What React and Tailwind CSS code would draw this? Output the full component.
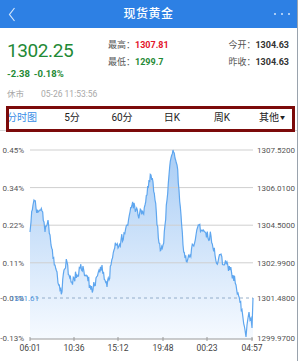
import React from 'react';

const keyPoints = [
  [30, 232], [31, 222], [33, 205], [34, 200], [36, 208], [38, 212], [40, 210], [42, 211],
  [44, 222], [45, 232], [47, 225], [48, 220], [50, 235], [51, 245], [53, 258], [55, 265],
  [57, 272], [58, 283], [60, 290], [62, 292], [64, 270], [67, 262], [69, 275], [71, 282],
  [74, 278], [77, 275], [80, 268], [83, 266], [86, 275], [90, 285], [93, 290], [96, 278],
  [99, 270], [102, 265], [105, 280], [107, 287], [109, 280], [111, 265], [114, 250], [116, 245],
  [118, 248], [121, 240], [124, 233], [127, 225], [130, 212], [132, 205], [134, 203], [136, 210],
  [138, 215], [141, 210], [143, 213], [145, 205], [147, 195], [149, 180], [151, 175], [153, 182],
  [155, 200], [157, 225], [159, 243], [161, 250], [163, 245], [165, 225], [167, 200], [169, 175],
  [171, 158], [173, 150], [175, 158], [177, 165], [179, 190], [181, 215], [183, 245], [185, 258],
  [187, 262], [190, 255], [193, 245], [196, 235], [199, 225], [202, 230], [205, 232], [208, 238],
  [211, 236], [213, 248], [215, 255], [218, 262], [221, 254], [224, 265], [227, 262], [230, 270],
  [233, 275], [236, 285], [238, 293], [240, 302], [242, 310], [243, 318], [245, 330], [246, 337],
  [247, 325], [248, 318], [249, 312], [250, 320], [251, 318], [252, 328], [253, 298],
];

// seeded jitter so the tick line looks noisy but stays the same every render
function buildLine() {
  let seed = 11;
  const rand = () => {
    seed = (seed * 16807) % 2147483647;
    return seed / 2147483647;
  };
  const pts = [];
  for (let i = 0; i < keyPoints.length - 1; i++) {
    const [x0, y0] = keyPoints[i];
    const [x1, y1] = keyPoints[i + 1];
    const steps = Math.max(1, Math.round((x1 - x0) / 0.7));
    for (let s = 0; s < steps; s++) {
      const t = s / steps;
      const x = x0 + (x1 - x0) * t;
      let y = y0 + (y1 - y0) * t;
      if (s > 0 && x < 244) y += (rand() - 0.5) * 10;
      pts.push([x, Math.min(338, y)]);
    }
  }
  pts.push(keyPoints[keyPoints.length - 1]);
  return pts;
}

const line = buildLine();
const linePath = line.map(([x, y], i) => `${i ? 'L' : 'M'}${x.toFixed(1)},${y.toFixed(1)}`).join(' ');
const areaPath = `M30,339 ${line.map(([x, y]) => `L${x.toFixed(1)},${y.toFixed(1)}`).join(' ')} L253,339 Z`;

const grid = [
  { y: 150, left: '0.45%', right: '1307.5200' },
  { y: 187.6, left: '0.34%', right: '1306.0100' },
  { y: 225.2, left: '0.22%', right: '1304.5000' },
  { y: 262.8, left: '0.11%', right: '1302.9900' },
  { y: 298, left: '-0.01%', right: '1301.4800', dashed: true },
  { y: 338, left: '-0.13%', right: '1299.9700', axis: true },
];

const times = [
  { x: 30, t: '06:01' },
  { x: 74, t: '10:36' },
  { x: 118, t: '15:12' },
  { x: 163, t: '19:48' },
  { x: 207, t: '00:23' },
  { x: 252, t: '04:57' },
];

const tabs = ['分时图', '5分', '60分', '日K', '周K', '其他'];

export default function App() {
  return (
    <div className="flex w-[300px] h-[361px] overflow-hidden bg-white font-['Roboto','Noto_Sans_CJK_SC',sans-serif]">
      <div className="w-[297px] flex flex-col">
        {/* Header */}
        <div className="h-[28px] bg-[#2d80e4] flex items-center text-white">
          <div className="w-[40px] pl-[8px] flex items-center">
            <svg width="8" height="15" viewBox="0 0 8 15">
              <polyline points="6.5,1 1.5,7.5 6.5,14" fill="none" stroke="#d2e5fb" strokeWidth="1.2" />
            </svg>
          </div>
          <div className="flex-1 text-center text-[12px] font-medium tracking-[0.5px]">现货黄金</div>
          <div className="w-[40px] flex justify-end pr-[7px] gap-[5px]">
            <span className="w-[2px] h-[2px] rounded-full bg-[#d2e5fb]" />
            <span className="w-[2px] h-[2px] rounded-full bg-[#d2e5fb]" />
            <span className="w-[2px] h-[2px] rounded-full bg-[#d2e5fb]" />
          </div>
        </div>

        {/* Quote info */}
        <div className="h-[76px] flex">
          <div className="w-[100px] pl-[7px] pt-[12px] flex flex-col">
            <div className="text-[19px] leading-[22px] text-[#1f8a36] tracking-[-0.4px]">1302.25</div>
            <div className="mt-[6px] text-[9.5px] leading-[12px] font-bold text-[#1f8a36] flex gap-[4px]">
              <span>-2.38</span>
              <span>-0.18%</span>
            </div>
            <div className="mt-[8px] text-[8.5px] leading-[12px] text-[#a8a8a8] flex gap-[17px] whitespace-nowrap">
              <span>休市</span>
              <span>05-26 11:53:56</span>
            </div>
          </div>
          <div className="flex-1 pl-[8px] pr-[8px] pt-[11px] flex justify-between text-[9px] leading-[12px]">
            <div className="flex flex-col gap-[5px]">
              <div>
                <span className="text-[#555]">最高：</span>
                <span className="font-bold text-[#e3162c]">1307.81</span>
              </div>
              <div>
                <span className="text-[#555]">最低：</span>
                <span className="font-bold text-[#1f8a36]">1299.7</span>
              </div>
            </div>
            <div className="flex flex-col gap-[5px] items-end">
              <div>
                <span className="text-[#555]">今开：</span>
                <span className="font-bold text-[#333]">1304.63</span>
              </div>
              <div>
                <span className="text-[#555]">昨收：</span>
                <span className="font-bold text-[#333]">1304.63</span>
              </div>
            </div>
          </div>
        </div>

        {/* Tabs */}
        <div className="relative h-[27px] border-b border-[#d8d8d8]">
          <div className="grid grid-cols-6 w-[300px] -ml-[3px] h-full items-center text-[10px]">
            {tabs.map((t, i) => (
              <div key={t} className={`text-center ${i === 0 ? 'text-[#3a8ee6]' : 'text-[#222]'}`}>
                {t}
                {i === 5 && <span className="text-[5px] align-middle ml-[1px]">▼</span>}
              </div>
            ))}
          </div>
          <div className="absolute left-[6px] top-[2px] w-[289px] h-[26px] border-[3px] border-[#7c0a0a]" />
        </div>

        {/* Chart */}
        <svg width="297" height="230" viewBox="0 131 297 230" className="block">
          <defs>
            <linearGradient id="fill" x1="0" y1="0" x2="0" y2="1">
              <stop offset="0%" stopColor="#a9cdf5" />
              <stop offset="100%" stopColor="#f6faff" />
            </linearGradient>
          </defs>
          <path d={areaPath} fill="url(#fill)" />
          {grid.map((g) =>
            g.axis || g.dashed ? null : (
              <line key={g.y} x1="30" x2="253" y1={g.y} y2={g.y} stroke="#cfcfcf" strokeWidth="1" />
            )
          )}
          <path d={linePath} fill="none" stroke="#5ea6ef" strokeWidth="1.2" strokeLinejoin="miter" />
          <line x1="36" x2="253" y1="298" y2="298" stroke="#7f9cbd" strokeWidth="0.8" strokeDasharray="3 3" />
          <line x1="30" x2="253" y1="339" y2="339" stroke="#9a9a9a" strokeWidth="1" />
          {times.map((t) => (
            <g key={t.t}>
              <line x1={t.x} x2={t.x} y1="337" y2="341" stroke="#9a9a9a" strokeWidth="1" />
              <text x={t.x} y="350.5" fontSize="8.5" fill="#444" textAnchor="middle">{t.t}</text>
            </g>
          ))}
          {grid.map((g) => (
            <g key={g.left}>
              <text x="24" y={g.y + 3} fontSize="8" fill="#555" textAnchor="end">{g.left}</text>
              <text x="257" y={g.y + 3} fontSize="8" fill="#555">{g.right}</text>
            </g>
          ))}
          <text x="10" y="300.5" fontSize="8" fill="#4a8fd8">1301.61</text>
        </svg>
      </div>
      <div className="w-[3px] border-l border-[#9aa3ad] bg-white" />
    </div>
  );
}
